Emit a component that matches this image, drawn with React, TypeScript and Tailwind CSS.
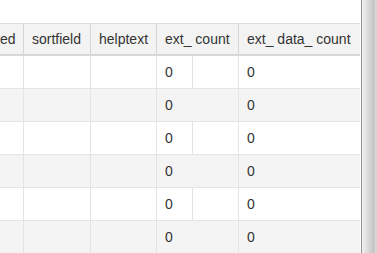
import React from 'react';

const rows = [0, 1, 2, 3, 4, 5];

const HeaderCell = ({ w, children, last }: { w: string; children: React.ReactNode; last?: boolean }) => (
  <div className={`${w} h-full flex items-center pl-2 overflow-hidden whitespace-nowrap ${last ? '' : 'border-r border-[#d5d5d5]'}`}>
    {children}
  </div>
);

export default function App() {
  return (
    <div className="w-[377px] h-[253px] overflow-hidden bg-white flex font-['Liberation_Sans',Arial,sans-serif] text-[14px] text-[#333]">
      <div className="w-[361px] flex flex-col">
        <div className="h-[23px] shrink-0" />
        {/* header */}
        <div className="w-[360px] h-[33px] shrink-0 flex bg-[#f3f3f3] border-t border-t-[#dedede] border-b-2 border-b-[#d8d8d8]">
          <div className="w-[24px] h-full flex items-center border-r border-[#d5d5d5] whitespace-nowrap overflow-hidden">ed</div>
          <HeaderCell w="w-[67px]">sortfield</HeaderCell>
          <HeaderCell w="w-[66px]">helptext</HeaderCell>
          <HeaderCell w="w-[82px]">ext_ count</HeaderCell>
          <HeaderCell w="w-[121px]" last>ext_ data_ count</HeaderCell>
        </div>
        {/* body */}
        {rows.map((i) => {
          const odd = i % 2 === 1;
          return (
            <div
              key={i}
              className={`w-[360px] h-[33px] shrink-0 flex border-b border-[#e4e4e4] ${odd ? 'bg-[#f4f4f4]' : 'bg-white'}`}
            >
              <div className="w-[24px] h-full border-r border-[#e4e4e4]" />
              <div className="w-[67px] h-full border-r border-[#e4e4e4]" />
              <div className="w-[66px] h-full border-r border-[#e4e4e4]" />
              <div className="w-[82px] h-full border-r border-[#e4e4e4] flex">
                <div className={`w-[36px] h-full flex items-center pl-2 ${odd ? '' : 'border-r border-[#e4e4e4]'}`}>0</div>
              </div>
              <div className="w-[121px] h-full flex items-center pl-2">0</div>
            </div>
          );
        })}
      </div>
      {/* scrollbar */}
      <div className="w-[16px] h-full shrink-0 border-l border-[#8f8f8f] bg-[linear-gradient(to_right,#f2f2f2_0%,#e2e2e2_25%,#d2d2d2_55%,#c4c4c4_82%,#e0e0e0_92%,#cfcfcf_100%)]" />
    </div>
  );
}
